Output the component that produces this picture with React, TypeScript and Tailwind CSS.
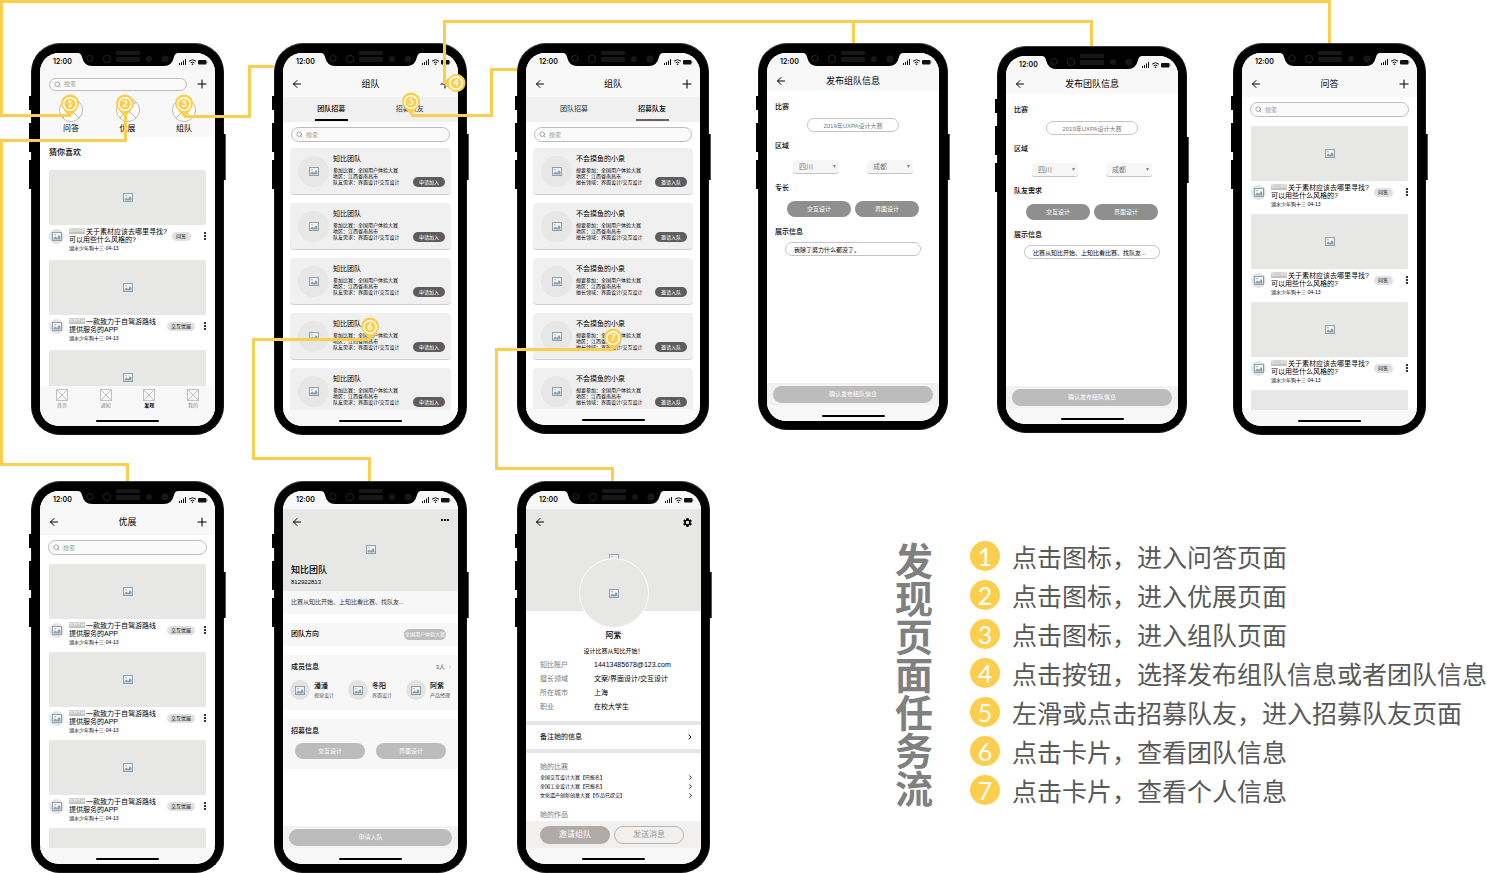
import type { ReactNode } from "react";
import { ArrowLeft, ChevronRight, Plus, Search } from "lucide-react";
import { MdSettings } from "react-icons/md";

/* ---------- small drawings ---------- */

function Picture({ className = "h-[9px] w-[10px]" }: { className?: string }) {
  return (
    <svg viewBox="0 0 20 18" className={`shrink-0 ${className}`} aria-hidden="true">
      <rect x="1" y="1" width="18" height="16" fill="#f1f3f4" stroke="#8fa1ac" strokeWidth="2" />
      <path d="M3 15v-3l4-3 3 3 4-6 3 4v5z" fill="#8fa1ac" />
      <circle cx="6" cy="5.500" r="1.400" fill="#8fa1ac" />
    </svg>
  );
}

function CrossedCircle() {
  return (
    <svg viewBox="0 0 24 24" className="size-6" fill="none" stroke="#9b9b9b" strokeWidth="0.7" aria-hidden="true">
      <circle cx="12" cy="12" r="11.500" fill="#fff" />
      <path d="M4 4l16 16M20 4L4 20" />
    </svg>
  );
}

function CrossedSquare() {
  return (
    <svg viewBox="0 0 12 12" className="size-3" fill="none" stroke="#b4b4b4" strokeWidth="0.8" aria-hidden="true">
      <path d="M.5.5h11v11H.5zM.5.5l11 11M11.500.5l-11 11" />
    </svg>
  );
}

function Signals() {
  return (
    <svg viewBox="0 0 30 8" className="h-2 w-[30px]" aria-hidden="true">
      <path d="M1 5h1v2H1zM3 4h1v3H3zM5 2.500h1v4.500H5zM7 1h1v6H7z" fill="#111" />
      <path d="M11 3.200q3.500-3 7 0M12.600 4.800q1.900-1.500 3.800 0" fill="none" stroke="#111" strokeWidth="1" />
      <circle cx="14.500" cy="6.300" r=".8" fill="#111" />
      <rect x="20" y="2" width="8.500" height="4.500" rx="1" fill="#111" />
      <path d="M29 3.500v1.500" stroke="#555" strokeWidth=".7" />
    </svg>
  );
}

function Notch() {
  return (
    <svg viewBox="0 0 100 23" className="absolute top-0 left-1/2 h-[23px] w-[100px] -translate-x-1/2" aria-hidden="true">
      <path d="M0 10h100q-3 0-4 4-2 9-10 9H14q-8 0-10-9-1-4-4-4z" fill="#000" />
      <g fill="none" stroke="#1e1e1e" strokeWidth="1.200">
        <circle cx="12" cy="15.500" r="3" />
        <circle cx="29" cy="16" r="3.600" />
      </g>
      <g fill="#171717">
        <rect x="38" y="8" width="24" height="4" rx="1" />
        <rect x="38" y="14" width="24" height="5" rx="1" />
        <circle cx="71" cy="16" r="3" />
        <circle cx="87" cy="16" r="3.600" />
      </g>
    </svg>
  );
}

/* ---------- phone shell ---------- */

function Phone({ place, label, children }: { place: string; label: string; children: ReactNode }) {
  return (
    <section aria-label={label} className={`absolute ${place}`}>
      <div className="absolute top-[53px] -left-[2px] h-[14px] w-1 bg-black" />
      <div className="absolute top-[80px] -left-[2px] h-[29px] w-1 bg-black" />
      <div className="absolute top-[117px] -left-[2px] h-[29px] w-1 bg-black" />
      <div className="absolute top-[91px] -right-[2px] h-[46px] w-1 border-r border-[#555] bg-black" />
      <div className="flex h-full flex-col rounded-[29px] border border-[#161616] border-t-[#3d3a35] bg-black px-2 pt-[9px] pb-2">
        <div className="flex flex-1 flex-col overflow-hidden rounded-[19px] bg-white">
          <div className="flex h-[18px] shrink-0 items-center justify-between bg-[#f8f8f8] pr-[7px] pl-[13px]">
            <span className="text-[7px] leading-[8px] font-semibold [font-family:Inter,sans-serif]">12:00</span>
            <Signals />
          </div>
          <div className="flex min-h-0 flex-1 flex-col overflow-hidden">{children}</div>
          <div className="flex h-4 shrink-0 justify-center bg-[#f8f8f8] pt-[10px]">
            <div className="h-[2px] w-[63px] rounded-full bg-black" />
          </div>
        </div>
      </div>
      <Notch />
    </section>
  );
}

function BackButton() {
  return (
    <button aria-label="返回">
      <ArrowLeft className="size-3 text-black" strokeWidth={2} />
    </button>
  );
}

function AddButton() {
  return (
    <button aria-label="添加">
      <Plus className="size-[14px] text-black" strokeWidth={1.8} />
    </button>
  );
}

function TitleBar({ title, add = false, height = "h-[26px]" }: { title: string; add?: boolean; height?: string }) {
  return (
    <header className={`grid shrink-0 grid-cols-[1fr_auto_1fr] items-center bg-[#f8f8f8] pr-2 pl-2 ${height}`}>
      <div className="flex">
        <BackButton />
      </div>
      <h2 className="text-[9px] leading-[10px]">{title}</h2>
      <div className="-mr-[2px] flex justify-end">{add && <AddButton />}</div>
    </header>
  );
}

function SearchBox({ className = "h-[15px]" }: { className?: string }) {
  return (
    <label className={`flex flex-1 items-center gap-[3px] rounded-full border border-[#bdbdbd] bg-[#fafafa] px-1 ${className}`}>
      <Search className="size-[7px] shrink-0 text-[#777]" />
      <input
        type="search"
        aria-label="搜索"
        placeholder="搜索"
        className="w-full min-w-0 bg-transparent text-[6px] leading-[8px] outline-none placeholder:text-[#999]"
      />
    </label>
  );
}

/* ---------- feed screens ---------- */

type Post = { tag: string; lines: [string, string]; kind: string };

const question: Post = { tag: "知识问答", lines: ["关于素材应该去哪里寻找?", "可以用些什么风格的?"], kind: "问答" };
const showcase: Post = { tag: "优秀作品", lines: ["一款致力于自驾游路线", "提供服务的APP"], kind: "交互优展" };

function PostItem({ post }: { post: Post }) {
  return (
    <article className="shrink-0">
      <div className="flex h-[55px] items-center justify-center rounded-[2px] bg-[#e7e7e6]">
        <Picture />
      </div>
      <div className="flex items-start pt-[3px]">
        <div className="mt-px flex size-[15px] shrink-0 items-center justify-center rounded-full bg-[#e3e3e3]">
          <Picture />
        </div>
        <div className="ml-[5px] w-0 flex-1 text-[7px] leading-[8px] whitespace-nowrap">
          <h3>
            <span className="mr-px inline-block w-4 overflow-hidden bg-[#c2c2c2] align-top text-center text-[4px] leading-[6px] text-white">
              {post.tag}
            </span>
            {post.lines[0]}
            <br />
            {post.lines[1]}
          </h3>
          <p className="text-[5px] leading-[8px]">湖水少年狗十三·04-13</p>
        </div>
        <div className="mt-1 flex w-7 shrink-0 justify-center">
          <span className="min-w-[19px] rounded-full bg-[#e0e0e0] px-1 text-center text-[5px] leading-[9px] whitespace-nowrap">
            {post.kind}
          </span>
        </div>
        <button aria-label="更多" className="mt-1 ml-[9px] flex shrink-0 flex-col gap-px">
          <i className="size-[2px] bg-[#333]" />
          <i className="size-[2px] bg-[#333]" />
          <i className="size-[2px] bg-[#333]" />
        </button>
      </div>
    </article>
  );
}

function CutCard() {
  return <div className="h-[55px] shrink-0 rounded-[2px] bg-[#e7e7e6]" />;
}

function FeedScreen({ place, title, post }: { place: string; title: string; post: Post }) {
  return (
    <Phone place={place} label={title}>
      <TitleBar title={title} add />
      <div className="flex shrink-0 px-2 py-[5px]">
        <SearchBox />
      </div>
      <div className="flex flex-col gap-[6px] px-[9px] pt-1">
        {[0, 1, 2].map((n) => (
          <PostItem key={n} post={post} />
        ))}
        <CutCard />
      </div>
    </Phone>
  );
}

function HomeScreen({ place }: { place: string }) {
  return (
    <Phone place={place} label="发现">
      <header className="h-[66px] shrink-0 bg-[#f8f8f8]">
        <div className="flex h-[26px] items-center gap-2 pr-[6px] pl-[9px]">
          <SearchBox className="h-[13px]" />
          <AddButton />
        </div>
        <nav className="flex justify-between px-[19px] pt-px">
          {["问答", "优展", "组队"].map((name) => (
            <a key={name} href="#" className="flex w-6 flex-col items-center text-[8px] leading-[14px]">
              <CrossedCircle />
              {name}
            </a>
          ))}
        </nav>
      </header>
      <h2 className="shrink-0 px-[9px] pt-[11px] pb-3 text-[8px] leading-[10px] font-medium">猜你喜欢</h2>
      <div className="flex min-h-0 flex-1 flex-col gap-2 overflow-hidden px-[9px]">
        <PostItem post={question} />
        <PostItem post={showcase} />
        <div className="flex h-[55px] shrink-0 items-center justify-center rounded-[2px] bg-[#e7e7e6]">
          <Picture />
        </div>
      </div>
      <nav className="flex h-6 shrink-0 justify-between bg-[#f8f8f8] px-4 pt-[3px]">
        {["首页", "通知", "发现", "我的"].map((name) => (
          <a
            key={name}
            href="#"
            className={`flex w-3 flex-col items-center text-[5px] leading-[9px] whitespace-nowrap ${
              name === "发现" ? "font-bold text-black" : "text-[#888]"
            }`}
          >
            <CrossedSquare />
            {name}
          </a>
        ))}
      </nav>
    </Phone>
  );
}

/* ---------- team lists ---------- */

function TeamScreen({
  place,
  active,
  underline,
  name,
  facts,
  action,
}: {
  place: string;
  active: number;
  underline: string;
  name: string;
  facts: string[];
  action: string;
}) {
  return (
    <Phone place={place} label="组队">
      <TitleBar title="组队" add />
      <div className="grid h-[25px] shrink-0 grid-cols-2 bg-[#f0f0f0] px-[9px]">
        {["团队招募", "招募队友"].map((tab, n) => (
          <button
            key={tab}
            className={`mx-auto mt-[2px] mb-px w-[33px] border-b-2 text-[7px] leading-[8px] whitespace-nowrap ${
              n === active ? `font-medium ${underline}` : "border-transparent text-[#333]"
            }`}
          >
            {tab}
          </button>
        ))}
      </div>
      <div className="flex shrink-0 px-2 pt-[5px]">
        <SearchBox />
      </div>
      <div className="flex flex-col gap-2 px-[7px] pt-[6px]">
        {[0, 1, 2, 3, 4].map((n) => (
          <article key={n} className="flex h-[47px] shrink-0 items-start rounded-[4px] border-b border-[#cfcfcf] bg-[#f0f0f0] pr-[6px] pl-2">
            <div className="mt-2 flex size-[31px] shrink-0 items-center justify-center rounded-full bg-[#e7e7e6]">
              <Picture />
            </div>
            <div className="ml-1 min-w-0 flex-1 pt-[7px] whitespace-nowrap">
              <h3 className="text-[7px] leading-[8px]">{name}</h3>
              <div className="mt-1 text-[5px] leading-[6px]">
                {facts.map((fact) => (
                  <p key={fact}>{fact}</p>
                ))}
              </div>
            </div>
            <button className="mb-[7px] h-[10px] w-8 shrink-0 self-end rounded-full bg-[#5d5d5d] text-[5px] leading-[10px] text-white">
              {action}
            </button>
          </article>
        ))}
      </div>
    </Phone>
  );
}

/* ---------- publish forms ---------- */

function Region({ label, value }: { label: string; value: string }) {
  return (
    <div className="relative">
      <select
        aria-label={label}
        defaultValue={value}
        className="block h-[14px] w-[46px] appearance-none rounded-[3px] border-b border-[#c4c4c4] bg-[#f6f6f6] px-[6px] text-[7px] leading-[12px] text-[#777]"
      >
        <option>{value}</option>
      </select>
      <svg viewBox="0 0 4 4" className="absolute top-[5px] right-[3px] size-[3px]" aria-hidden="true">
        <path d="M0 0h4L2 4z" fill="#888" />
      </svg>
    </div>
  );
}

function FormLabel({ children, className }: { children: ReactNode; className: string }) {
  return <h3 className={`px-2 text-[7px] leading-[8px] font-medium ${className}`}>{children}</h3>;
}

function PublishScreen({ place, title, skills, note }: { place: string; title: string; skills: string; note: string }) {
  return (
    <Phone place={place} label={title}>
      <TitleBar title={title} height="h-5" />
      <form className="flex flex-1 flex-col">
        <FormLabel className="mt-3">比赛</FormLabel>
        <input
          aria-label="比赛"
          defaultValue="2019年UXPA设计大赛"
          className="mt-[7px] h-[14px] w-[92px] self-center rounded-full border border-[#c4c4c4] text-center text-[6px] text-[#777]"
        />
        <FormLabel className="mt-[10px]">区域</FormLabel>
        <div className="mt-[10px] flex justify-center gap-7">
          <Region label="省份" value="四川" />
          <Region label="城市" value="成都" />
        </div>
        <FormLabel className="mt-[10px]">{skills}</FormLabel>
        <div className="mt-[9px] flex justify-center gap-1">
          {["交互设计", "界面设计"].map((skill) => (
            <button key={skill} type="button" className="h-4 w-16 rounded-full bg-[#8f8f8f] text-[6px] leading-[16px] text-white">
              {skill}
            </button>
          ))}
        </div>
        <FormLabel className="mt-[11px]">展示信息</FormLabel>
        <input
          aria-label="展示信息"
          defaultValue={note}
          className="mt-[6px] h-[14px] w-[136px] self-center rounded-full border border-[#c4c4c4] px-2 text-[6px]"
        />
        <div className="mt-auto flex h-[22px] items-center bg-[#f2f2f2] px-[6px]">
          <button type="button" className="h-[17px] w-full rounded-full bg-[#bcbcbc] text-[6px] leading-[17px] text-white">
            确认发布组队信息
          </button>
        </div>
      </form>
    </Phone>
  );
}

/* ---------- detail screens ---------- */

const members = [
  { name: "潘潘", role: "视觉设计" },
  { name: "冬阳", role: "界面设计" },
  { name: "阿紫", role: "产品经理" },
];

function TeamDetail({ place }: { place: string }) {
  return (
    <Phone place={place} label="知比团队">
      <header className="h-[82px] shrink-0 bg-[#e7e7e6] px-2">
        <div className="flex h-[26px] items-center justify-between">
          <BackButton />
          <button aria-label="更多" className="mb-1 flex gap-px pr-px">
            <i className="size-[2px] bg-black" />
            <i className="size-[2px] bg-black" />
            <i className="size-[2px] bg-black" />
          </button>
        </div>
        <div className="flex h-7 items-center justify-center">
          <Picture />
        </div>
        <h2 className="text-[9px] leading-[14px] font-medium">知比团队</h2>
        <p className="text-[6px] leading-[10px]">812922813</p>
      </header>
      <p className="h-[23px] shrink-0 bg-[#f7f7f7] px-2 text-[6px] leading-[23px] text-[#333]">
        比赛从知比开始、上知比看比赛、找队友...
      </p>
      <div className="mt-[9px] flex h-[23px] shrink-0 items-center justify-between bg-[#f7f7f7] pr-3 pl-2">
        <h3 className="text-[7px] font-medium">团队方向</h3>
        <span className="rounded-full bg-[#bcbcbc] px-px text-[5px] leading-[11px] text-white">全国用户体验大赛</span>
      </div>
      <div className="mt-[9px] h-[55px] shrink-0 bg-[#f7f7f7] pt-2 pr-[5px] pl-[7px]">
        <div className="flex items-center justify-between leading-[8px]">
          <h3 className="pl-px text-[7px] font-medium">成员信息</h3>
          <a href="#" className="flex items-center gap-[2px] text-[6px] text-[#555]">
            3人 <ChevronRight className="size-[6px] text-[#aaa]" />
          </a>
        </div>
        <ul className="mt-[9px] grid grid-cols-[58px_58px_auto]">
          {members.map((m) => (
            <li key={m.name} className="flex gap-1">
              <span className="flex size-5 shrink-0 items-center justify-center rounded-full bg-[#e3e3e3]">
                <Picture />
              </span>
              <span className="whitespace-nowrap">
                <b className="block text-[7px] leading-[11px] font-medium">{m.name}</b>
                <small className="block text-[5px] leading-[8px] text-[#555]">{m.role}</small>
              </span>
            </li>
          ))}
        </ul>
      </div>
      <div className="mt-[9px] h-[50px] shrink-0 bg-[#f7f7f7] px-2 pt-2">
        <h3 className="text-[7px] leading-[8px] font-medium">招募信息</h3>
        <div className="mt-2 flex justify-between px-1">
          {["交互设计", "界面设计"].map((skill) => (
            <button key={skill} className="h-4 w-[70px] rounded-full bg-[#bcbcbc] text-[6px] leading-[16px] text-white">
              {skill}
            </button>
          ))}
        </div>
      </div>
      <div className="mt-auto flex h-[22px] shrink-0 items-center bg-[#f2f2f2] px-[6px]">
        <button className="h-[17px] w-full rounded-full bg-[#bcbcbc] text-[6px] leading-[17px] text-white">申请入队</button>
      </div>
    </Phone>
  );
}

const profile = [
  ["知比账户", "14413485678@123.com"],
  ["擅长领域", "文案/界面设计/交互设计"],
  ["所在城市", "上海"],
  ["职业", "在校大学生"],
];

const contests = ["全国交互设计大赛【已报名】", "全国工业设计大赛【已报名】", "文化遗产创新创意大赛【作品已提交】"];

function ProfileDetail({ place }: { place: string }) {
  return (
    <Phone place={place} label="阿紫">
      <header className="h-[102px] shrink-0 bg-[#e7e7e6]">
        <div className="flex h-[26px] items-center justify-between px-2">
          <BackButton />
          <button aria-label="设置">
            <MdSettings className="size-[11px] text-black" />
          </button>
        </div>
        <div className="flex justify-center pt-[19px]">
          <Picture />
        </div>
      </header>
      <div className="relative -mt-[53px] flex size-[70px] shrink-0 items-center justify-center self-center rounded-full border border-white bg-[#e7e7e6]">
        <Picture />
      </div>
      <h2 className="mt-[3px] shrink-0 text-center text-[8px] leading-[10px] font-medium">阿紫</h2>
      <p className="mt-1 shrink-0 text-center text-[6px] leading-[12px]">设计比赛从知比开始！</p>
      <dl className="grid shrink-0 grid-cols-[54px_1fr] pt-px pr-2 pl-[14px] text-[7px] leading-[14px] whitespace-nowrap">
        {profile.map(([key, value]) => (
          <div key={key} className="contents">
            <dt className="text-[#777]">{key}</dt>
            <dd>{value}</dd>
          </div>
        ))}
      </dl>
      <a href="#" className="mt-[7px] flex h-8 shrink-0 items-center justify-between border-y-4 border-[#e5e5e5] pr-[7px] pl-[14px] text-[7px]">
        备注她的信息
        <ChevronRight className="size-[8px]" strokeWidth={3} />
      </a>
      <div className="min-h-0 flex-1 overflow-hidden pt-[9px] pr-[7px] pl-[14px]">
        <h3 className="text-[7px] leading-[10px] text-[#777]">她的比赛</h3>
        <ul className="mt-px text-[5px] leading-[9px]">
          {contests.map((c) => (
            <li key={c} className="flex items-center justify-between">
              {c}
              <ChevronRight className="size-[7px]" strokeWidth={3} />
            </li>
          ))}
        </ul>
        <h3 className="mt-[10px] text-[7px] leading-[10px] text-[#777]">她的作品</h3>
      </div>
      <div className="flex h-[27px] shrink-0 items-center gap-1 bg-[#f1f0ef] px-[14px]">
        <button className="h-[18px] w-[70px] rounded-full bg-[#b0aaa9] text-[8px] leading-[18px] text-white">邀请组队</button>
        <button className="h-[18px] w-[70px] rounded-full border border-[#b5b5b5] text-[8px] leading-[16px] text-[#999]">发送消息</button>
      </div>
    </Phone>
  );
}

/* ---------- flow lines and pins ---------- */

const pins = [
  { n: 1, x: 70, y: 104, turn: 0 },
  { n: 2, x: 125, y: 104, turn: 0 },
  { n: 3, x: 184, y: 104, turn: 0 },
  { n: 4, x: 456, y: 83, turn: 90 },
  { n: 5, x: 411, y: 102, turn: 0 },
  { n: 6, x: 370, y: 327, turn: 0 },
  { n: 7, x: 613, y: 338, turn: 0 },
];

function FlowLines() {
  return (
    <svg viewBox="0 0 1503 873" className="pointer-events-none absolute top-0 left-0 h-[873px] w-[1503px]" aria-hidden="true">
      <g fill="none" stroke="#fbcf4d" strokeWidth="3">
        <path d="M71 115.500H1.500V1.500H1329.500V43" />
        <path d="M125.500 112V140.500H1.500V464.500H127.500V481" />
        <path d="M184 116.500H249.500V66.500H274" />
        <path d="M444.500 83V21.500H1091.500V46M853.500 21.500V43" />
        <path d="M411 115.500H491.500V69.500H517" />
        <path d="M370 339.500H253.500V458.500H369.500V481" />
        <path d="M613 349.500H496.500V468.500H612.500V481" />
      </g>
      {pins.map((p) => (
        <g key={p.n} transform={`translate(${p.x} ${p.y})`}>
          <path d="M-8.500 2.500A9 9 0 1 1 8.500 2.500Q6 7 0 13 -6 7 -8.500 2.500Z" fill="#fbcf4d" transform={`rotate(${p.turn})`} />
          <circle r="7" fill="#fff" />
          <circle r="5.600" fill="#fbcf4d" />
          <text y="3" textAnchor="middle" fill="#fff" fontSize="9" fontWeight="700" fontFamily="Lato, sans-serif">
            {p.n}
          </text>
        </g>
      ))}
    </svg>
  );
}

const steps = [
  "点击图标，进入问答页面",
  "点击图标，进入优展页面",
  "点击图标，进入组队页面",
  "点击按钮，选择发布组队信息或者团队信息",
  "左滑或点击招募队友，进入招募队友页面",
  "点击卡片，查看团队信息",
  "点击卡片，查看个人信息",
];

function Legend() {
  return (
    <aside className="absolute top-[539px] left-[895px] flex items-center gap-[37px]">
      <h1 className="w-[38px] text-[38px] leading-[38px] font-bold break-all text-[#808080]">发现页面任务流</h1>
      <ol className="text-[25px] leading-[39px] whitespace-nowrap text-[#595959]">
        {steps.map((step, n) => (
          <li key={step} className="flex items-start gap-3">
            <span className="mt-[2px] size-[30px] rounded-full bg-[#fbcf4d] text-center text-[25px] leading-[30px] text-white [font-family:Lato,sans-serif]">
              {n + 1}
            </span>
            {step}
          </li>
        ))}
      </ol>
    </aside>
  );
}

export default function App() {
  return (
    <main className="relative min-h-screen overflow-x-clip bg-white text-black [font-family:'Liberation_Sans','Noto_Sans_CJK_SC',sans-serif]">
      <HomeScreen place="left-[31px] top-[43px] w-[193px] h-[392px]" />
      <TeamScreen
        place="left-[274px] top-[43px] w-[193px] h-[392px]"
        active={0}
        underline="border-black"
        name="知比团队"
        facts={["参加比赛：全国用户体验大赛", "地区：江西省南昌市", "队友需求：界面设计/交互设计"]}
        action="申请加入"
      />
      <TeamScreen
        place="left-[517px] top-[43px] w-[192px] h-[391px]"
        active={1}
        underline="border-[#6b6363]"
        name="不会摸鱼的小泉"
        facts={["想要参加：全国用户体验大赛", "地区：江西省南昌市", "擅长领域：界面设计/交互设计"]}
        action="邀请入队"
      />
      <PublishScreen
        place="left-[758px] top-[43px] w-[190px] h-[387px]"
        title="发布组队信息"
        skills="专长"
        note="我除了努力什么都没了。"
      />
      <PublishScreen
        place="left-[997px] top-[46px] w-[190px] h-[387px]"
        title="发布团队信息"
        skills="队友需求"
        note="比赛从知比开始、上知比看比赛、找队友..."
      />
      <FeedScreen place="left-[1233px] top-[43px] w-[193px] h-[392px]" title="问答" post={question} />
      <FeedScreen place="left-[31px] top-[481px] w-[193px] h-[392px]" title="优展" post={showcase} />
      <TeamDetail place="left-[274px] top-[481px] w-[193px] h-[392px]" />
      <ProfileDetail place="left-[517px] top-[481px] w-[193px] h-[392px]" />
      <Legend />
      <FlowLines />
    </main>
  );
}
